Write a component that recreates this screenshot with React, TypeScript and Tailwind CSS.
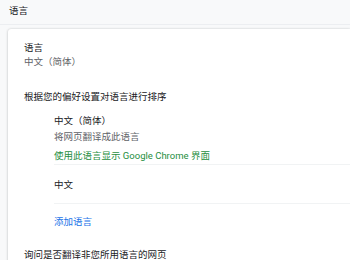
import React from 'react';

const font = { fontFamily: 'Roboto, "Noto Sans CJK SC", sans-serif' };

const App: React.FC = () => {
  return (
    <div className="w-[350px] h-[260px] overflow-hidden bg-[#f8f9fa] text-[9.5px] leading-[14px]" style={font}>
      {/* Section title */}
      <div className="h-[25px] border-b border-[#eceef1] pl-[9px] pt-[4px] text-[#202124]">语言</div>

      {/* Card */}
      <div className="ml-[8px] mt-[4px] h-[300px] bg-white rounded-tl-[3px] shadow-[0_0_2px_rgba(60,64,67,0.25),0_1px_3px_rgba(60,64,67,0.15)] pl-[16px] pt-[12px]">
        <div className="text-[#202124]">语言</div>
        <div className="text-[#5f6368]">中文（简体）</div>

        <div className="mt-[21px] text-[#202124]">根据您的偏好设置对语言进行排序</div>

        <div className="ml-[30px] mt-[10px]">
          <div className="text-[#202124]">中文（简体）</div>
          <div className="mt-[2px] text-[#5f6368]">将网页翻译成此语言</div>
          <div className="mt-[5px] text-[#1e8e3e]">使用此语言显示 Google Chrome 界面</div>
          <div className="mt-[1px] border-t border-[#f1f3f4]" />
          <div className="mt-[13px] text-[#202124]">中文</div>
          <div className="mt-[11px] border-t border-[#f1f3f4]" />
          <div className="mt-[11px] text-[#1a73e8]">添加语言</div>
        </div>

        <div className="mt-[19px] text-[#202124]">询问是否翻译非您所用语言的网页</div>
      </div>
    </div>
  );
};

export default App;
